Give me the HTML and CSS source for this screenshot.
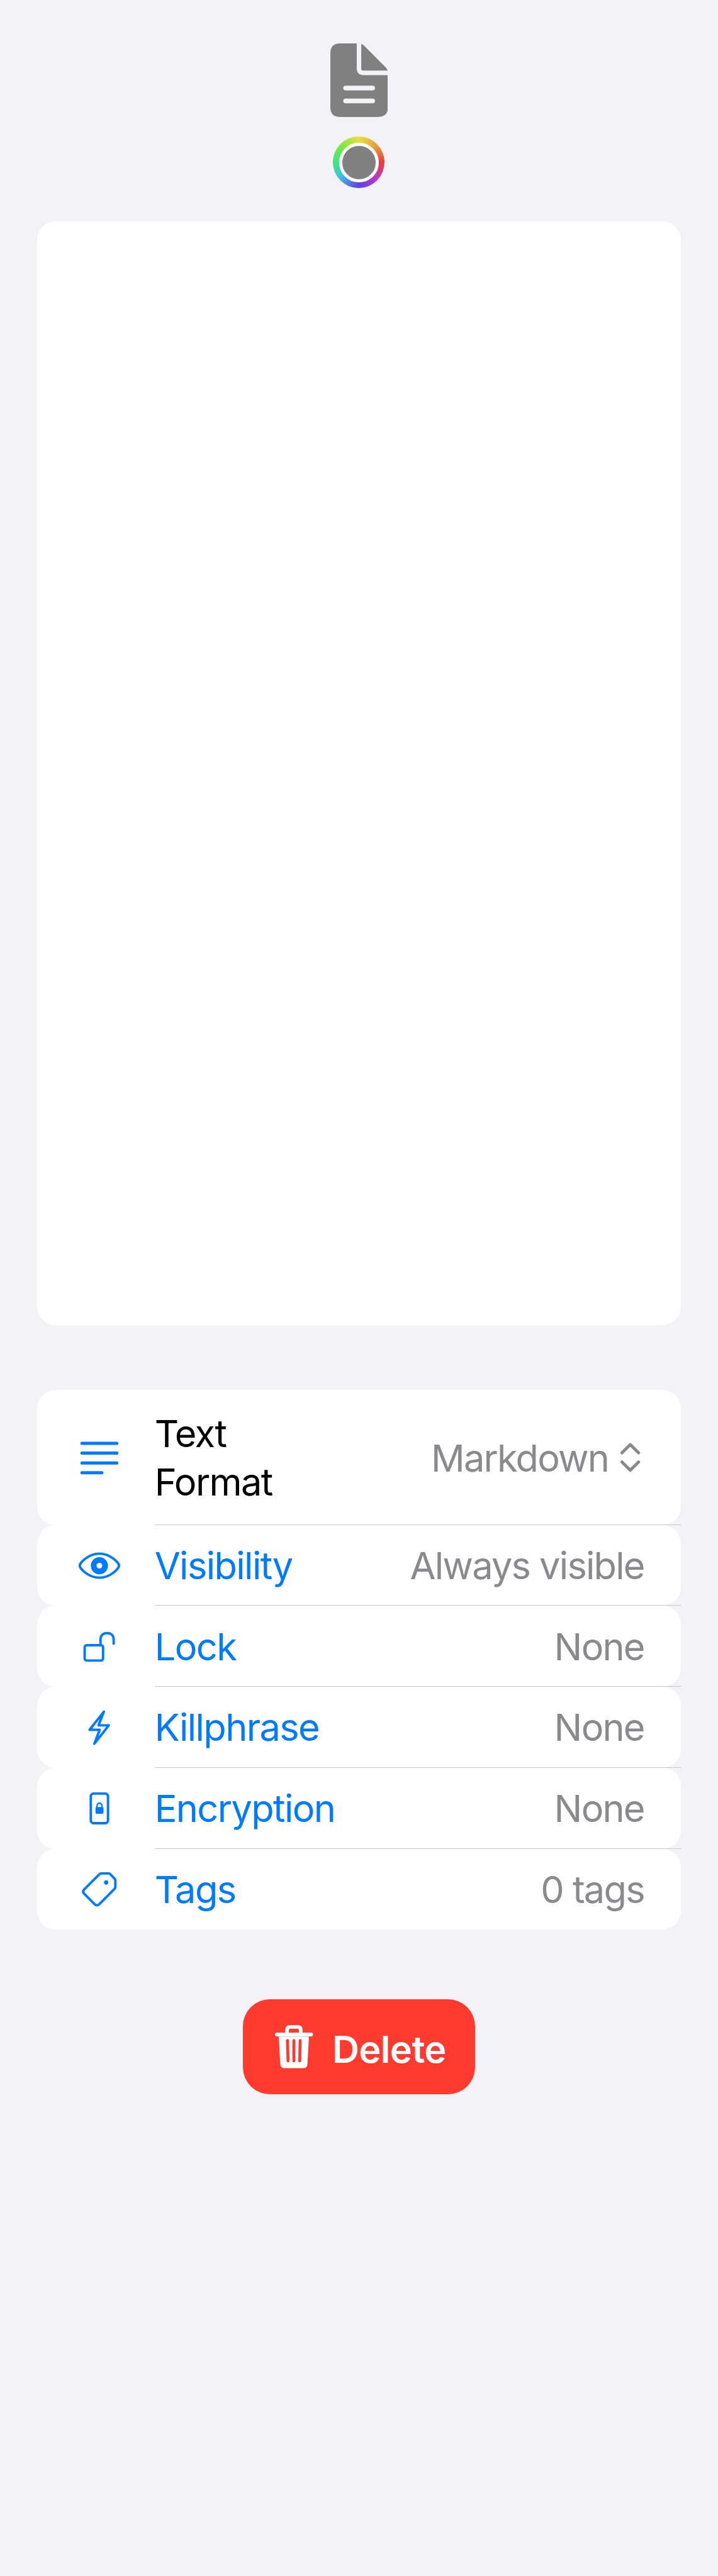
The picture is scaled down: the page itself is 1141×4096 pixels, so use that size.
FILE: index.html
```html
<!DOCTYPE html>
<html lang="en">
<head>
<meta charset="utf-8">
<meta name="viewport" content="width=device-width">
<title>Note</title>
<link rel="stylesheet" href="styles.css">
</head>
<body>
<main class="page">
  <header class="head">
    <svg class="doc" viewBox="0 0 282 360" fill="#808080">
      <path fill-rule="evenodd" d="M48 0H129V121Q129 155 161 155H282V312Q282 360 234 360H48Q0 360 0 312V48Q0 0 48 0ZM74.500 207a11.500 11.500 0 0 0 0 23H206.500a11.500 11.500 0 0 0 0-23ZM74.500 270a11.500 11.500 0 0 0 0 23H206.500a11.500 11.500 0 0 0 0-23Z"/>
      <path d="M151 3Q160 5 166 12L271 118Q278 125 279 133H160Q151 133 151 124Z"/>
    </svg>
    <button class="swatch" aria-label="Color"><span class="swatch-dot"></span></button>
  </header>

  <section class="editor"></section>

  <ul class="list">
    <li class="row row-tall">
      <svg class="icon icon-lines" viewBox="0 0 84 84"><path d="M13.600 18.400H70.300M13.600 34.400H70.300M13.600 50.500H70.300M13.600 66.500H46"/></svg>
      <div class="cell">
        <span class="label label-plain">Text<br>Format</span>
        <span class="value">Markdown</span>
        <svg class="chevrons" viewBox="0 0 34 50"><path d="M3.500 17.500L17 4.200L30.500 17.500M3.500 32.500L17 45.800L30.500 32.500"/></svg>
      </div>
    </li>
    <li class="row">
      <svg class="icon" viewBox="0 0 84 84"><path d="M10 42.600C10 38 24 23 42 23S74 38 74 42.600S60 62.200 42 62.200S10 47.200 10 42.600Z"/><circle cx="42" cy="42.600" r="9.350" stroke-width="9.300"/></svg>
      <div class="cell"><span class="label">Visibility</span><span class="value">Always visible</span></div>
    </li>
    <li class="row">
      <svg class="icon" viewBox="0 0 84 84"><rect x="18" y="40" width="30" height="25" rx="3.500"/><path d="M43.800 40V31C43.800 24 48 20.300 54.500 20.300S65.300 24 65.300 31V37.500"/></svg>
      <div class="cell"><span class="label">Lock</span><span class="value">None</span></div>
    </li>
    <li class="row">
      <svg class="icon" viewBox="0 0 84 84"><path d="M49.400 16L26 45.700H42.500L33.800 68.300L57.400 38.300H40.600Z"/></svg>
      <div class="cell"><span class="label">Killphrase</span><span class="value">None</span></div>
    </li>
    <li class="row">
      <svg class="icon" viewBox="0 0 84 84"><rect x="28" y="18.300" width="28" height="48.400" rx="4.500"/><path d="M38.100 41V38.600C38.100 32.600 46.300 32.600 46.300 38.600V41" stroke-width="2.400"/><rect class="solid" x="35.700" y="40.300" width="13" height="11" rx="2"/></svg>
      <div class="cell"><span class="label">Encryption</span><span class="value">None</span></div>
    </li>
    <li class="row">
      <svg class="icon" viewBox="0 0 84 84"><path d="M44.700 16.300H57.300Q58.500 16.300 59.300 17.100L67.200 25.200Q68 26 68 27.200V38.800Q68 40.200 67 41.200L41.500 66.700Q38 69.800 34.500 66.700L17 49.200Q14 46 17 42.800L42.300 17.300Q43.300 16.300 44.700 16.300Z"/><circle class="solid" cx="53" cy="31" r="3.500"/></svg>
      <div class="cell"><span class="label">Tags</span><span class="value">0 tags</span></div>
    </li>
  </ul>

  <button class="delete">
    <svg class="trash" viewBox="0 0 186 212">
      <path d="M18 56H166L159 190Q158 211 137 211H47Q27 211 26 190Z" fill="#fff"/>
      <path d="M9 46H177M59 46V24Q59 9 74 9H112Q126 9 126 24V46" fill="none" stroke="#fff" stroke-width="18" stroke-linecap="round"/>
      <path d="M61 76L64 175M92.500 76V175M123 76L121 175" fill="none" stroke="#ff3b30" stroke-width="14.500" stroke-linecap="round"/>
    </svg>
    <span class="delete-text">Delete</span>
  </button>
</main>
</body>
</html>
```

FILE: styles.css
```css
/* 1rem is 10 layout units */
html {
  font-size: 9.75px;
  background: #f2f2f7;
}

body {
  margin: 0;
  font-family: Inter, "Liberation Sans", sans-serif;
}

.page {
  box-sizing: border-box;
  width: 117rem;
  min-height: 420rem;
  padding: 7.1rem 6rem 0;
  display: flex;
  flex-direction: column;
  align-items: center;
}

.head {
  display: flex;
  flex-direction: column;
  align-items: center;
  gap: 3.2rem;
}

.doc {
  display: block;
  width: 9.4rem;
  height: 12rem;
}

.swatch {
  display: flex;
  align-items: center;
  justify-content: center;
  width: 8.4rem;
  height: 8.4rem;
  padding: 0;
  border: 0;
  border-radius: 50%;
  background: conic-gradient(#e6e045, #e8a33c 45deg, #e83c3c 90deg, #b838d0 135deg, #6040e6 180deg, #40c0e0 232deg, #40e680 270deg, #80e640 315deg, #e6e045);
}

.swatch-dot {
  width: 5.4rem;
  height: 5.4rem;
  border: 0.6rem solid #fff;
  border-radius: 50%;
  background: #808080;
}

.editor {
  width: 100%;
  height: 180rem;
  margin-top: 5.4rem;
  border-radius: 3rem;
  background: #fff;
}

.list {
  width: 100%;
  margin: 10.6rem 0 0;
  padding: 0;
  list-style: none;
}

.row {
  display: flex;
  align-items: center;
  height: 13.2rem;
  border-radius: 3rem;
  background: #fff;
}

.row-tall {
  height: 22rem;
}

.icon {
  flex: none;
  width: 8.4rem;
  height: 8.4rem;
  margin: 0 4.8rem 0 6rem;
  fill: none;
  stroke: #007aff;
  stroke-width: 4;
  stroke-linecap: round;
  stroke-linejoin: round;
}

.icon-lines {
  stroke-width: 5.2;
}

.solid {
  fill: #007aff;
  stroke: none;
}

.cell {
  box-sizing: border-box;
  flex: 1;
  display: flex;
  align-items: center;
  height: 100%;
  padding-right: 6rem;
  box-shadow: inset 0 -1px #c6c6c8;
  font-size: 6.1rem;
  line-height: 7.8rem;
  letter-spacing: -0.027em;
  white-space: nowrap;
}

.row:last-child .cell {
  box-shadow: none;
}

.label {
  flex: 1;
  color: #007aff;
}

.label-plain {
  color: #000;
}

.value {
  color: #8a8a8e;
  letter-spacing: -0.03em;
}

.chevrons {
  width: 3.4rem;
  height: 5rem;
  margin: 0 0.6rem 0 1.8rem;
  fill: none;
  stroke: #8a8a8e;
  stroke-width: 5;
  stroke-linecap: round;
  stroke-linejoin: round;
}

.delete {
  box-sizing: border-box;
  display: flex;
  align-items: center;
  width: 37.9rem;
  height: 15.5rem;
  margin-top: 11.4rem;
  padding: 0 0 0 5.3rem;
  border: 0;
  border-radius: 4.4rem;
  background: #ff3b30;
  color: #fff;
  font: 600 6.1rem/7.8rem Inter, "Liberation Sans", sans-serif;
  letter-spacing: -0.01em;
}

.trash {
  flex: none;
  width: 6.2rem;
  height: 7.07rem;
}

.delete-text {
  padding: 0.6rem 0 0 3.1rem;
}
```
